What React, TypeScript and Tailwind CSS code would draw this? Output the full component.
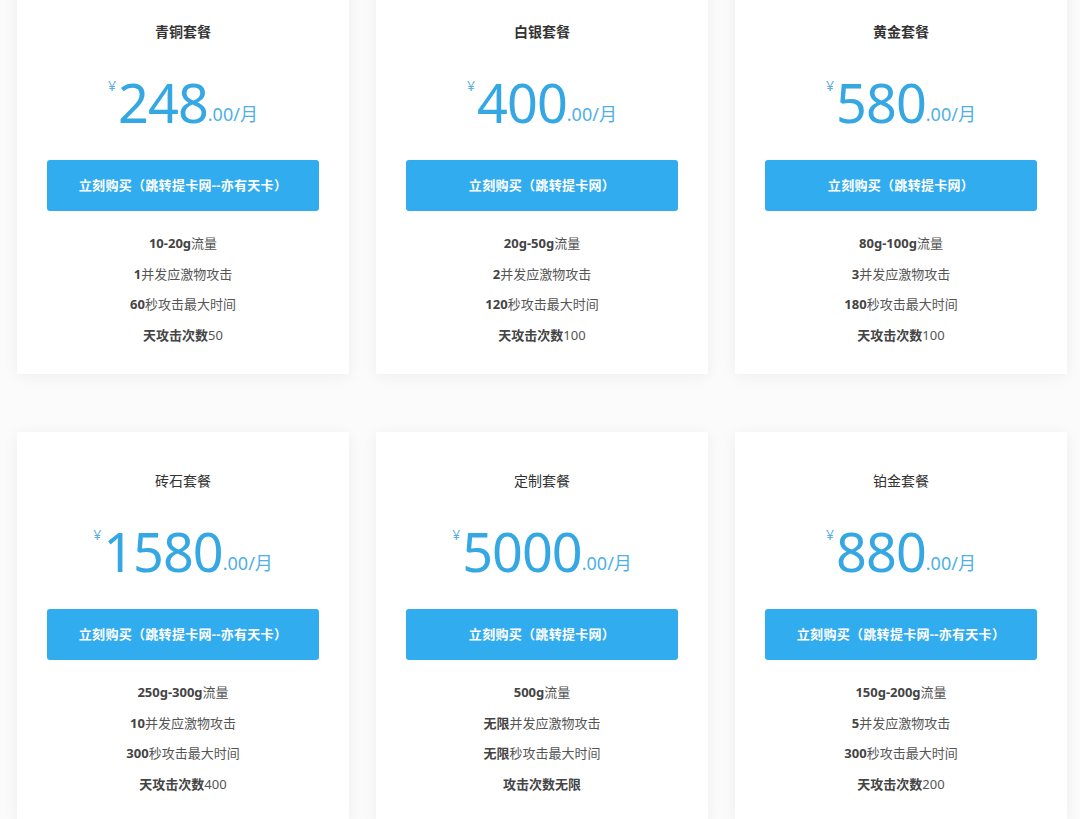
import React from "react";

type Feature = { strong: string; text: string };

type Plan = {
  name: string;
  price: string;
  button: string;
  titleBold?: boolean;
  features: Feature[];
};

const plans: Plan[] = [
  {
    name: "青铜套餐",
    price: "248",
    button: "立刻购买（跳转提卡网--亦有天卡）",
    titleBold: true,
    features: [
      { strong: "10-20g", text: "流量" },
      { strong: "1", text: "并发应激物攻击" },
      { strong: "60", text: "秒攻击最大时间" },
      { strong: "天攻击次数", text: "50" },
    ],
  },
  {
    name: "白银套餐",
    price: "400",
    button: "立刻购买（跳转提卡网）",
    titleBold: true,
    features: [
      { strong: "20g-50g", text: "流量" },
      { strong: "2", text: "并发应激物攻击" },
      { strong: "120", text: "秒攻击最大时间" },
      { strong: "天攻击次数", text: "100" },
    ],
  },
  {
    name: "黄金套餐",
    price: "580",
    button: "立刻购买（跳转提卡网）",
    titleBold: true,
    features: [
      { strong: "80g-100g", text: "流量" },
      { strong: "3", text: "并发应激物攻击" },
      { strong: "180", text: "秒攻击最大时间" },
      { strong: "天攻击次数", text: "100" },
    ],
  },
  {
    name: "砖石套餐",
    price: "1580",
    button: "立刻购买（跳转提卡网--亦有天卡）",
    features: [
      { strong: "250g-300g", text: "流量" },
      { strong: "10", text: "并发应激物攻击" },
      { strong: "300", text: "秒攻击最大时间" },
      { strong: "天攻击次数", text: "400" },
    ],
  },
  {
    name: "定制套餐",
    price: "5000",
    button: "立刻购买（跳转提卡网）",
    features: [
      { strong: "500g", text: "流量" },
      { strong: "无限", text: "并发应激物攻击" },
      { strong: "无限", text: "秒攻击最大时间" },
      { strong: "攻击次数无限", text: "" },
    ],
  },
  {
    name: "铂金套餐",
    price: "880",
    button: "立刻购买（跳转提卡网--亦有天卡）",
    features: [
      { strong: "150g-200g", text: "流量" },
      { strong: "5", text: "并发应激物攻击" },
      { strong: "300", text: "秒攻击最大时间" },
      { strong: "天攻击次数", text: "200" },
    ],
  },
];

const PlanCard: React.FC<{ plan: Plan }> = ({ plan }) => (
  <div className="bg-white shadow-[0_2px_14px_rgba(0,0,0,0.06)] pt-[39px] pb-[24px] px-[30px] flex flex-col items-center">
    <h3
      className={`text-[14px] leading-[20px] text-[#333] ${
        plan.titleBold ? "font-semibold" : "font-normal"
      }`}
    >
      {plan.name}
    </h3>

    {/* Price */}
    <div className="mt-[24px] h-[66px] flex items-end text-[#35a8e4]">
      <span className="self-start mt-[12px] mr-[2px] text-[14px] leading-[16px] text-[#5aaee0]">¥</span>
      <span className="text-[54px] leading-[60px] tracking-[-1px]">{plan.price}</span>
      <span className="text-[18px] leading-[24px] mb-[6px] text-[#4fb0e6]">.00/月</span>
    </div>

    <button className="mt-[28px] w-full h-[51px] rounded-[3px] bg-[#31acef] text-white text-[13px] tracking-[0.3px] font-bold">
      {plan.button}
    </button>

    <ul className="mt-[17px] w-full flex flex-col items-center text-[13px] leading-[30.5px] text-[#555]">
      {plan.features.map((f, i) => (
        <li key={i}>
          <span className="font-bold text-[#444]">{f.strong}</span>
          {f.text}
        </li>
      ))}
    </ul>
  </div>
);

export default function App() {
  return (
    <div
      className="w-[1080px] h-[819px] overflow-hidden bg-[#fbfbfb]"
      style={{ fontFamily: '"Noto Sans", "Noto Sans CJK SC", sans-serif' }}
    >
      <div className="-mt-[17px] pl-[17px] grid grid-cols-[332px_332px_332px] gap-x-[27px] gap-y-[58px]">
        {plans.map((p) => (
          <PlanCard key={p.name} plan={p} />
        ))}
      </div>
    </div>
  );
}
